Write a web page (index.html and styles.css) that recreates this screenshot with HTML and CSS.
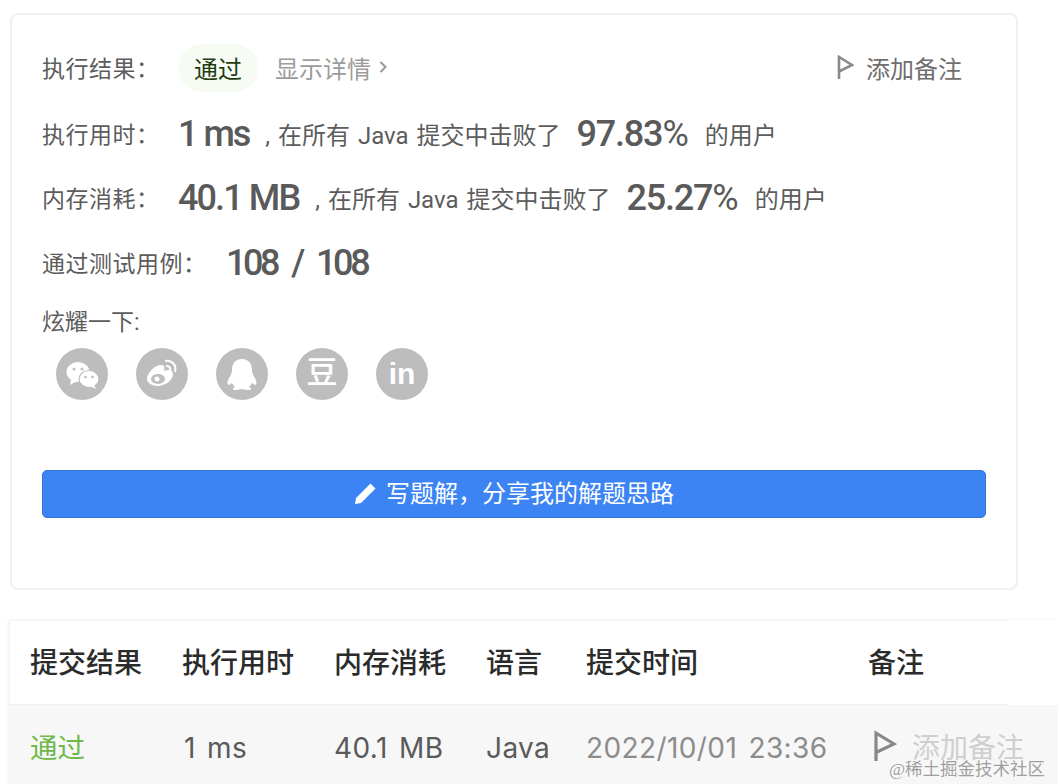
FILE: index.html
```html
<!DOCTYPE html>
<html lang="zh">
<head>
<meta charset="utf-8">
<title>提交结果</title>
<link rel="stylesheet" href="styles.css">
</head>
<body>
<section class="card">
  <div class="row result-row">
    <span class="label">执行结果：</span>
    <span class="pill">通过</span>
    <span class="details">显示详情<svg class="chev" viewBox="0 0 8 12" width="8" height="12"><path d="M1.500 1 6.500 6l-5 5" fill="none" stroke="#999" stroke-width="2"/></svg></span>
    <span class="note">
      <svg class="flag" viewBox="0 0 17 24" width="17" height="24"><path d="M2 24V2l13 8-12 6" fill="none" stroke="#8a8a8a" stroke-width="2.600"/></svg>
      添加备注
    </span>
  </div>
  <div class="row stat-row time-row">
    <span class="label">执行用时：</span>
    <span class="num num-ms">1 ms</span>
    <span class="text">, 在所有 Java 提交中击败了</span>
    <span class="num pct">97.83<i class="pc">%</i></span>
    <span class="text">的用户</span>
  </div>
  <div class="row stat-row mem-row">
    <span class="label">内存消耗：</span>
    <span class="num num-mb">40.1 MB</span>
    <span class="text">, 在所有 Java 提交中击败了</span>
    <span class="num pct">25.27<i class="pc">%</i></span>
    <span class="text">的用户</span>
  </div>
  <div class="row stat-row case-row">
    <span class="label wide">通过测试用例：</span>
    <span class="num num-case">108 &nbsp;/&nbsp; 108</span>
  </div>
  <div class="share-label">炫耀一下:</div>
  <div class="share">
    <span class="circle"><svg viewBox="0 0 52 52" width="52" height="52"><ellipse cx="22" cy="24" rx="11.500" ry="10" fill="#fff"/><path d="M15 31l-1 6 7-4z" fill="#fff"/><ellipse cx="33" cy="31" rx="10" ry="8.500" fill="#fff" stroke="#bdbdbd" stroke-width="1.200"/><path d="M38 37l2 4-6-3z" fill="#fff"/><circle cx="18" cy="21" r="1.500" fill="#bdbdbd"/><circle cx="26" cy="21" r="1.500" fill="#bdbdbd"/><circle cx="29.500" cy="29" r="1.300" fill="#bdbdbd"/><circle cx="36.500" cy="29" r="1.300" fill="#bdbdbd"/></svg></span>
    <span class="circle"><svg viewBox="0 0 52 52" width="52" height="52"><path d="M11 31c0-6 8-14 14-14 4 0 4 3 3 6 5-2 9-1 9 3 0 7-9 12-15 12-6 0-11-3-11-7z" fill="#fff"/><ellipse cx="22" cy="31" rx="7" ry="5" fill="#bdbdbd"/><circle cx="21" cy="31" r="2.500" fill="#fff"/><path d="M29 13c7-1 12 4 10 11M30 18c3-.5 5 2 4 5" fill="none" stroke="#fff" stroke-width="2"/></svg></span>
    <span class="circle"><svg viewBox="0 0 52 52" width="52" height="52"><path d="M26 11c-7 0-10 5-10 11 0 3-1 5-3 8-2 4-2 7 0 7l3-2c1 2 2 3 3 4-3 1-3 3 1 3 3 0 5-1 6-1s3 1 6 1c4 0 4-2 1-3 1-1 2-2 3-4l3 2c2 0 2-3 0-7-2-3-3-5-3-8 0-6-3-11-10-11z" fill="#fff"/></svg></span>
    <span class="circle glyph-dou">豆</span>
    <span class="circle glyph-in">in</span>
  </div>
  <div class="action">
    <button class="write" type="button">
      <svg viewBox="0 0 22 22" width="22" height="22"><path d="M1 21l1-6L14 3l5 5L7 20zM15.500 1.500l1-1 5 5-1 1-1.500 1.500-5-5z" fill="#fff"/></svg>
      写题解，分享我的解题思路
    </button>
  </div>
</section>

<section class="table">
  <div class="thead">
    <span>提交结果</span><span>执行用时</span><span>内存消耗</span><span>语言</span><span>提交时间</span><span>备注</span>
  </div>
  <div class="tbody">
    <span class="ok">通过</span><span class="ms-cell">1 ms</span><span>40.1 MB</span><span>Java</span><span class="date">2022/10/01 23:36</span>
    <span class="cell-note">
      <svg viewBox="0 0 24 32" width="24" height="32"><path d="M3 31V3l18 11-17 8" fill="none" stroke="#888" stroke-width="3.200"/></svg>
      添加备注
    </span>
  </div>
  <div class="watermark">@稀土掘金技术社区</div>
</section>
</body>
</html>
```
FILE: styles.css
```css
* { box-sizing: border-box; }
html, body { margin: 0; padding: 0; }
body {
  width: 1058px;
  height: 784px;
  overflow: hidden;
  background: #fff;
  color: #5c5c5c;
  font-family: "Roboto", "Noto Sans CJK SC", sans-serif;
  padding-top: 13px;
}
.card {
  margin-left: 10px;
  width: 1008px;
  height: 577px;
  border: 2px solid #f0f0f0;
  border-radius: 8px;
  padding: 27px 30px 0;
}
.row { display: flex; align-items: center; font-size: 23px; }
.result-row { height: 50px; }
.label { width: 136px; flex: none; white-space: nowrap; letter-spacing: .5px; }
.label.wide { width: 184px; }
.pill {
  width: 80px;
  height: 48px;
  margin-top: 2px;
  border-radius: 24px;
  background: #f6fbf3;
  color: #1f3d12;
  font-size: 24px;
  display: flex;
  align-items: center;
  justify-content: center;
  padding-bottom: 2px;
}
.details {
  margin-left: 17px;
  font-size: 24px;
  color: #9c9c9c;
  display: flex;
  align-items: center;
  gap: 8px;
}
.note {
  margin-left: auto;
  margin-right: 24px;
  font-size: 24px;
  color: #6e6e6e;
  display: flex;
  align-items: center;
  gap: 12px;
}
.stat-row { height: 64px; }
.time-row { margin-top: 9px; }
.case-row { position: relative; top: 1px; }
.num { font-size: 36px; font-weight: 500; color: #5a5a5a; white-space: nowrap; letter-spacing: -1.200px; padding-top: 2px; }
.num-ms { letter-spacing: -2px; }
.num-mb { letter-spacing: -1.900px; }
.num-case { letter-spacing: -3.400px; word-spacing: 1.500px; }
.pc { font-style: normal; font-weight: 400; letter-spacing: 0; }
.text { white-space: pre; margin-left: 16px; font-size: 24px; word-spacing: 2px; }
.pct { margin-left: 16px; }
.share-label { font-size: 23px; margin-top: 13px; height: 34px; line-height: 34px; }
.share { display: flex; gap: 28px; margin-top: 8px; margin-left: 14px; }
.circle {
  width: 52px;
  height: 52px;
  border-radius: 50%;
  background: #bdbdbd;
  color: #fff;
  display: flex;
  align-items: center;
  justify-content: center;
}
.glyph-dou { font-size: 31px; font-weight: 500; line-height: 1; padding-bottom: 3px; }
.glyph-in { font-size: 30px; font-weight: 700; font-family: "Liberation Sans", sans-serif; }
.action { margin-top: 70px; }
.write {
  width: 944px;
  height: 48px;
  border: 1px solid #3573d6;
  border-radius: 5px;
  background: #3c84f4;
  color: #fff;
  font: inherit;
  font-size: 24px;
  line-height: 1;
  display: flex;
  align-items: center;
  justify-content: center;
  gap: 10px;
  padding: 0 0 1px;
}
.table {
  position: relative;
  margin-top: 30px;
  margin-left: 10px;
  box-shadow: -2px 0 3px #f2f2f2;
}
.thead, .tbody {
  display: grid;
  grid-template-columns: 152px 152px 152px 100px 282px 1fr;
  padding-left: 20px;
  align-items: center;
}
.thead {
  width: 998px;
  height: 85px;
  padding-bottom: 4px;
  border-top: 1px solid #f5f5f5;
  border-bottom: 1px solid #f0f0f0;
  font-size: 28px;
  font-weight: 500;
  color: #2b2b2b;
}
.tbody {
  height: 80px;
  padding-top: 6px;
  background: #f7f7f7;
  font-family: "Inter", "Noto Sans CJK SC", sans-serif;
  font-size: 28px;
  letter-spacing: .4px;
  word-spacing: 3px;
  color: #5a5a5a;
}
.ms-cell { padding-left: 2px; }
.ok { color: #6fb84a; font-size: 27.500px; letter-spacing: 0; position: relative; top: -2px; }
.date { color: #8c8c8c; }
.cell-note {
  display: flex;
  align-items: center;
  gap: 15px;
  margin-left: 5px;
  font-size: 28px;
  letter-spacing: 0;
  color: #cfcfcf;
  white-space: nowrap;
  position: relative;
  top: -2px;
}
.watermark {
  position: absolute;
  left: 879px;
  bottom: 6px;
  font-family: "Liberation Serif", "Noto Sans CJK SC", serif;
  font-size: 17.500px;
  line-height: 20px;
  color: rgba(120, 120, 120, .7);
  white-space: nowrap;
}
```
